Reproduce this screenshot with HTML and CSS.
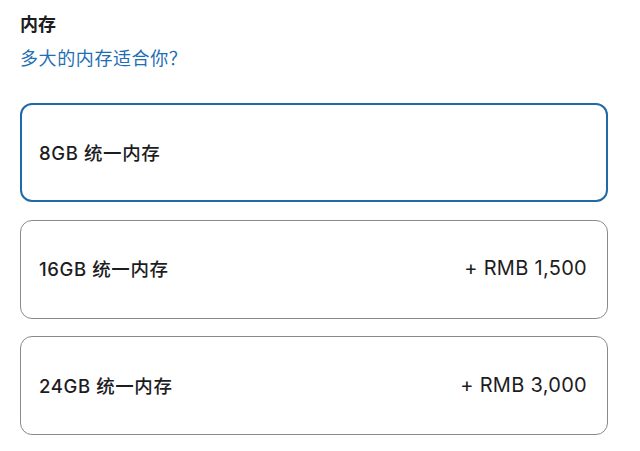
FILE: index.html
```html
<!DOCTYPE html>
<html lang="zh-CN">
<head>
<meta charset="utf-8">
<link rel="stylesheet" href="styles.css">
</head>
<body>
<section class="memory">
  <h2 class="title">内存</h2>
  <a class="help" href="#">多大的内存适合你？</a>
  <div class="options">
    <div class="option selected"><span class="name">8GB 统一内存</span></div>
    <div class="option"><span class="name">16GB 统一内存</span><span class="price">+ RMB 1,500</span></div>
    <div class="option"><span class="name">24GB 统一内存</span><span class="price">+ RMB 3,000</span></div>
  </div>
</section>
</body>
</html>
```
FILE: styles.css
```css
html, body {
  margin: 0;
  padding: 0;
  background: #fff;
}
body {
  font-family: Inter, "Noto Sans CJK SC", sans-serif;
  color: #1d1d1f;
}
.memory {
  display: flex;
  flex-direction: column;
  padding: 12px 32px 0 20px;
}
.title {
  margin: 0;
  font-size: 18px;
  line-height: 26px;
  font-weight: 600;
}
.help {
  margin-top: 8px;
  font-size: 18px;
  line-height: 26px;
  color: #1f6fb5;
  text-decoration: none;
  letter-spacing: 0.6px;
}
.options {
  margin-top: 31px;
  display: flex;
  flex-direction: column;
  gap: 17.5px;
}
.option {
  box-sizing: border-box;
  height: 99px;
  border: 1px solid #8a8a8e;
  border-radius: 12px;
  display: flex;
  align-items: center;
  justify-content: space-between;
  padding: 0 20px 2px 18px;
  font-size: 18.5px;
  font-weight: 500;
}
.option.selected {
  border: 2px solid #1f6aa8;
  padding: 0 19px 2px 17px;
}
.name {
  letter-spacing: 0.6px;
}
.price {
  font-weight: 400;
  font-size: 20px;
  letter-spacing: 0.3px;
}
```
